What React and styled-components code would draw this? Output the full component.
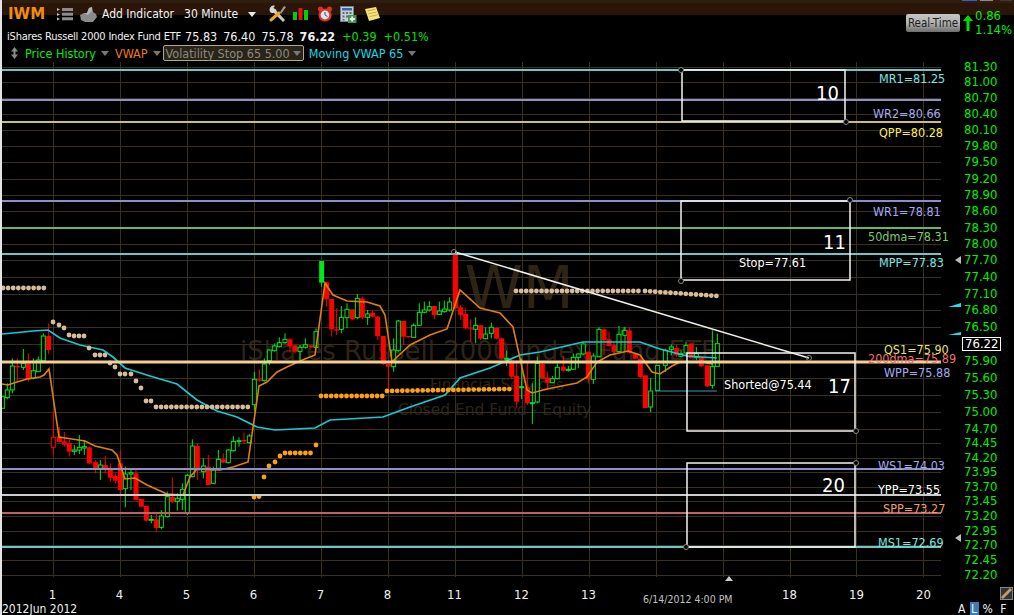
import React from 'react';
import styled, { createGlobalStyle } from 'styled-components';

const FONT = `"DejaVu Sans Condensed", "DejaVu Sans", sans-serif`;

const GlobalStyle = createGlobalStyle`
    html, body {
        margin: 0;
        padding: 0;
        background: #000;
    }
`;

const Page = styled.div`
    position: relative;
    width: 1014px;
    height: 615px;
    box-sizing: border-box;
    background: #000;
    border-left: 2px solid #e4e4e4;
    overflow: hidden;
    display: flex;
    flex-direction: column;
    font-family: ${FONT};
    font-size: 12px;
    color: #fff;
`;

const Header = styled.div`
    position: relative;
    height: 62px;
    flex: none;
    display: flex;
    background: linear-gradient(#2e1e10 0, #2e1e10 3px, #2b1509 3px, #2b1509 15px, #000 15px);
`;

const WindowTabs = styled.div`
    position: absolute;
    top: 0;
    right: 2px;
    display: flex;
    gap: 3px;
`;

const WindowTab = styled.span`
    width: ${p => p.$w}px;
    height: 1px;
    margin-right: ${p => p.$gap || 0}px;
    background: ${p => p.$color};
`;

const HeaderLeft = styled.div`
    flex: 1;
    display: flex;
    flex-direction: column;
`;

const Toolbar = styled.div`
    height: 28px;
    display: flex;
    align-items: center;
    padding-left: 6px;
`;

const Symbol = styled.span`
    width: 46px;
    font-family: "DejaVu Sans", sans-serif;
    font-weight: bold;
    font-size: 15px;
    color: #f08c12;
`;

const ToolIcon = styled.svg`
    flex: none;
    display: block;
    margin-left: ${p => p.$ml || 0}px;
`;

const ToolText = styled.span`
    margin-left: ${p => p.$ml || 0}px;
    font-size: 12px;
    white-space: nowrap;
    color: #f4f4f4;
`;

const Caret = styled.span`
    display: inline-block;
    flex: none;
    width: 0;
    height: 0;
    margin-left: ${p => p.$ml || 5}px;
    border-left: 4px solid transparent;
    border-right: 4px solid transparent;
    border-top: 5px solid ${p => p.$color || '#777'};
`;

const QuoteRow = styled.div`
    height: 16px;
    display: flex;
    align-items: center;
    padding-left: 5px;
    white-space: nowrap;
`;

const FundName = styled.span`
    width: 178px;
    font-size: 11px;
    letter-spacing: -0.2px;
    color: #f2f2f2;
`;

const Quote = styled.span`
    margin-right: ${p => p.$mr || 6}px;
    font-size: 12.5px;
    font-weight: ${p => (p.$bold ? 'bold' : 'normal')};
    color: ${p => p.$color || '#f2f2f2'};
`;

const StudyRow = styled.div`
    height: 18px;
    display: flex;
    align-items: center;
    padding-left: 9px;
    white-space: nowrap;
`;

const SortArrows = styled.svg`
    flex: none;
    margin-right: 7px;
`;

const Study = styled.span`
    display: flex;
    align-items: center;
    font-size: 12.5px;
    color: ${p => p.$color};
    margin-right: ${p => p.$mr || 0}px;
`;

const StudySelected = styled(Study)`
    height: 14px;
    padding: 0 2px;
    margin-left: 2px;
    margin-right: 5px;
    border: 1px solid #b0a890;
    border-radius: 2px;
    background: #2a2418;
`;

const RealTimeArea = styled.div`
    width: 108px;
    flex: none;
    display: flex;
    align-items: flex-start;
    padding-top: 14px;
    box-sizing: border-box;
`;

const RealTimeButton = styled.div`
    width: 54px;
    height: 18px;
    flex: none;
    box-sizing: border-box;
    border-radius: 2px;
    background: linear-gradient(#c4c4c4, #b2b2b2 50%, #6e6e6e);
    color: #1c1c1c;
    font-size: 11.5px;
    line-height: 18px;
    text-align: center;
`;

const ChangeArrow = styled.svg`
    flex: none;
    margin-left: 3px;
    margin-top: 1px;
`;

const Change = styled.div`
    margin-left: 2px;
    margin-top: -5px;
    font-size: 13px;
    line-height: 14px;
    color: #00f000;
`;

const Main = styled.div`
    height: 515px;
    flex: none;
    display: flex;
`;

const ChartSvg = styled.svg`
    flex: none;
    display: block;
    overflow: visible;
    font-family: ${FONT};
`;

const LevelLabel = styled.text`
    font-size: 12.5px;
    fill: ${p => p.$color};
`;

const Watermark = styled.text`
    font-family: "DejaVu Sans", sans-serif;
    font-size: ${p => p.$size}px;
    fill: #2e2416;
`;

const BoxNumber = styled.text`
    font-size: 20px;
    fill: #fff;
`;

const PriceAxis = styled.div`
    position: relative;
    flex: 1;
    padding-left: 23px;
`;

const Tick = styled.div`
    display: flow-root;
    height: ${p => p.$h}px;
    font-size: 13px;
    line-height: 10px;
    color: #00f000;
`;

const CurrentPrice = styled.div`
    width: fit-content;
    margin-left: -2px;
    margin-top: -2px;
    padding: 0 2px;
    height: 12px;
    line-height: 12px;
    border: 1px solid #fff;
    color: #fff;
    background: #000;
`;

const AxisMark = styled.span`
    position: absolute;
    left: ${p => p.$x}px;
    top: ${p => p.$y}px;
    width: ${p => p.$w}px;
    height: ${p => p.$h}px;
    background: ${p => p.$color};
    clip-path: ${p => p.$shape};
`;

const BottomBar = styled.div`
    position: relative;
    flex: 1;
    display: flex;
    flex-direction: column;
`;

const DayRow = styled.div`
    display: grid;
    grid-template-columns: repeat(14, 67px);
    padding-left: 17px;
    padding-top: 10px;
    height: 15px;
    line-height: 15px;
    font-size: 13px;
    text-align: center;
    color: #f0f0f0;
`;

const Footer = styled.div`
    flex: 1;
    display: flex;
    justify-content: space-between;
    align-items: flex-end;
    font-size: 12px;
    line-height: 14px;
`;

const YearLabel = styled.span`
    color: #f0f0f0;
`;

const ScaleButtons = styled.div`
    display: flex;
    gap: 4px;
    padding-right: 6px;
    color: #f4f4f4;
`;

const ScaleButton = styled.span`
    padding: 0 1.5px;
    margin-left: ${p => p.$ml || 0}px;
    background: ${p => (p.$active ? '#3c7cb4' : 'transparent')};
`;

const ReadOut = styled.span`
    position: absolute;
    left: 641px;
    top: 16px;
    font-size: 10.5px;
    color: #c0c0c0;
`;

const CursorMark = styled.span`
    position: absolute;
    left: 723px;
    top: -1px;
    width: 8px;
    height: 5px;
    background: #ccc;
    clip-path: polygon(50% 0, 100% 100%, 0 100%);
`;

const RulerButton = styled.span`
    position: absolute;
    right: 1px;
    top: 10px;
    width: 13px;
    height: 13px;
    box-sizing: border-box;
    border: 1px solid #888;
    background: #333;
`;

const RulerSvg = styled.svg`
    display: block;
`;

const TICKS = [
    ['81.30', 67], ['81.00', 82], ['80.70', 98], ['80.40', 114], ['80.10', 130], ['79.80', 146],
    ['79.50', 162], ['79.20', 179], ['78.90', 195], ['78.60', 211], ['78.30', 228], ['78.00', 244],
    ['77.70', 260], ['77.40', 277], ['77.10', 294], ['76.80', 310], ['76.50', 327], ['76.22', 344],
    ['75.90', 361], ['75.60', 378], ['75.30', 395], ['75.00', 412], ['74.70', 429], ['74.45', 443],
    ['74.20', 458], ['73.95', 472], ['73.70', 487], ['73.45', 501], ['73.20', 516], ['72.95', 531],
    ['72.70', 545], ['72.45', 560], ['72.20', 575],
];

const DAY_LINES = [53, 120, 187, 254, 321, 388, 455, 522, 589, 656, 723, 790, 856, 923];
const DAYS = ['1', '4', '5', '6', '7', '8', '11', '12', '13', '', '', '18', '19', '20'];

const LEVELS = [
    [70, '#6ec6c6', 2], [100, '#8f8fc6', 2], [122, '#c8c070', 2], [201, '#8f8fc6', 2],
    [228, '#68b468', 2], [254, '#6ec6c6', 2], [362, '#f5cf94', 3], [469, '#8f8fc6', 2],
    [495, '#cccccc', 2], [513, '#c06060', 2], [547, '#6ec6c6', 2],
];

const LABELS = [
    ['MR1=81.25', 879, 83, '#80e4e4'], ['WR2=80.66', 873, 118, '#a4a8f0'], ['QPP=80.28', 879, 137, '#ffec50'],
    ['WR1=78.81', 873, 216, '#a4a8f0'], ['50dma=78.31', 868, 241, '#7ccc70'], ['MPP=77.83', 879, 267, '#80e4e4'],
    ['QS1=75.90', 884, 354, '#e8e070'], ['200dma=75.89', 868, 363, '#f07070'], ['WPP=75.88', 884, 377, '#a4a8f0'],
    ['WS1=74.03', 878, 470, '#a4a8f0'], ['YPP=73.55', 878, 494, '#ffffff'], ['SPP=73.27', 883, 513, '#f0a060'],
    ['MS1=72.69', 878, 547, '#78e8e0'], ['Stop=77.61', 739, 267, '#ffffff'], ['Shorted@75.44', 724, 389, '#ffffff'],
];

const BOXES = [
    { x: 682, y: 70, w: 163, h: 51, n: '10', nx: 816, ny: 100, handles: [[681, 70], [846, 122]] },
    { x: 681, y: 201, w: 169, h: 79, n: '11', nx: 823, ny: 249, handles: [[850, 200], [681, 281]] },
    { x: 687, y: 353, w: 168, h: 78, n: '17', nx: 828, ny: 393, handles: [[856, 431]] },
    { x: 687, y: 463, w: 168, h: 84, n: '20', nx: 822, ny: 492, handles: [[856, 463], [686, 547]] },
];

// crop coordinates are 3x the page, so they go through fromCrop below
const fromCrop = (ox, oy, rows) => rows.map(([x, t, b, wt, wb, kind]) => ({
    x: ox + x / 3, top: oy + t / 3, bottom: oy + b / 3, wickTop: oy + wt / 3, wickBottom: oy + wb / 3, kind,
}));

const CANDLES = [
    ...fromCrop(0, 250, [
        [7, 440, 475, 440, 475, 'u'], [22, 420, 443, 400, 448, 'u'], [37, 348, 420, 325, 430, 'u'], [52, 348, 352, 325, 395, 'd'],
        [70, 340, 352, 297, 360, 'u'], [85, 340, 388, 310, 395, 'd'], [100, 362, 385, 325, 388, 'u'], [115, 330, 365, 320, 365, 'u'],
        [130, 258, 332, 250, 335, 'u'], [146, 258, 300, 220, 312, 'd'], [160, 562, 592, 487, 615, 'r'], [178, 560, 576, 530, 578, 'd'],
        [193, 574, 584, 546, 590, 'd'], [208, 580, 605, 570, 620, 'd'], [223, 600, 604, 585, 615, 'u'], [238, 592, 600, 555, 612, 'u'],
        [253, 590, 594, 570, 615, 'u'], [268, 592, 640, 590, 642, 'd'], [287, 636, 655, 630, 670, 'd'], [301, 645, 655, 630, 690, 'u'],
        [316, 645, 655, 618, 670, 'd'], [331, 655, 683, 640, 695, 'd'], [346, 678, 692, 670, 700, 'd'], [361, 640, 720, 600, 740, 'd'],
        [376, 672, 716, 650, 772, 'u'], [393, 668, 672, 655, 720, 'u'], [408, 670, 750, 660, 752, 'd'], [424, 747, 770, 747, 770, 'd'],
        [439, 768, 812, 768, 815, 'd'], [454, 808, 810, 795, 820, 'u'], [469, 808, 834, 785, 845, 'd'], [484, 798, 832, 780, 838, 'u'],
        [502, 740, 800, 725, 802, 'u'], [517, 740, 755, 682, 760, 'd'], [532, 745, 755, 730, 782, 'u'], [547, 718, 748, 700, 780, 'u'],
        [562, 676, 788, 672, 795, 'u'], [577, 588, 680, 568, 682, 'u'], [592, 588, 662, 580, 690, 'd'], [610, 648, 665, 625, 685, 'u'],
        [625, 650, 705, 615, 705, 'd'], [640, 660, 700, 650, 700, 'u'], [655, 628, 655, 600, 660, 'u'], [670, 628, 638, 610, 640, 'd'],
        [685, 600, 638, 598, 640, 'u'], [700, 574, 602, 558, 605, 'u'], [717, 572, 574, 562, 590, 'u'], [732, 570, 574, 548, 582, 'd'],
        [748, 558, 578, 552, 580, 'u'], [763, 388, 464, 365, 482, 'u'], [778, 388, 392, 358, 395, 'd'], [793, 342, 392, 325, 395, 'u'],
        [808, 300, 332, 298, 345, 'u'], [823, 288, 302, 280, 305, 'u'], [838, 278, 290, 262, 292, 'u'], [855, 268, 278, 250, 282, 'u'],
        [870, 268, 288, 265, 308, 'd'], [885, 286, 305, 285, 310, 'd'], [900, 292, 304, 285, 332, 'u'], [916, 284, 292, 265, 296, 'u'],
        [933, 286, 292, 286, 292, 'd'], [948, 245, 292, 235, 296, 'u'],
    ]),
    ...fromCrop(300, 240, [
        [65, 63, 128, 63, 140, 's'], [80, 127, 178, 127, 200, 'd'], [95, 177, 268, 177, 290, 'd'], [110, 268, 272, 205, 285, 'd'],
        [124, 232, 268, 198, 280, 'u'], [141, 208, 233, 190, 265, 'u'], [157, 208, 238, 208, 240, 'd'], [172, 175, 233, 162, 238, 'u'],
        [187, 175, 233, 170, 238, 'd'], [203, 222, 232, 210, 255, 'u'], [218, 218, 230, 212, 232, 'd'], [233, 230, 288, 228, 300, 'd'],
        [250, 288, 372, 288, 375, 'd'], [265, 372, 380, 372, 450, 'd'], [281, 330, 380, 295, 395, 'u'], [295, 243, 332, 240, 335, 'u'],
        [311, 243, 290, 243, 315, 'd'], [326, 288, 292, 288, 292, 'd'], [341, 256, 292, 250, 292, 'u'], [358, 217, 256, 190, 258, 'u'],
        [373, 210, 217, 185, 220, 'u'], [388, 200, 210, 183, 215, 'u'], [403, 198, 225, 198, 238, 'd'], [418, 213, 223, 185, 225, 'u'],
        [433, 207, 215, 182, 218, 'u'], [449, 186, 210, 172, 215, 'u'], [466, 42, 205, 42, 205, 'd'], [482, 202, 225, 195, 240, 'd'],
        [497, 222, 265, 205, 268, 'd'], [512, 265, 268, 238, 305, 'd'], [527, 256, 268, 232, 310, 'u'], [542, 256, 296, 255, 300, 'd'],
        [557, 282, 296, 262, 298, 'u'], [574, 262, 280, 248, 295, 'u'], [590, 264, 296, 262, 298, 'd'], [605, 295, 355, 293, 358, 'd'],
        [620, 355, 358, 332, 378, 'u'], [635, 362, 410, 360, 418, 'd'], [650, 408, 485, 362, 503, 'd'], [665, 440, 442, 355, 478, 'u'],
        [682, 442, 490, 368, 495, 'd'], [697, 488, 490, 430, 552, 'u'], [712, 370, 486, 350, 490, 'u'], [727, 372, 415, 368, 418, 'd'],
        [742, 412, 428, 395, 448, 'd'], [757, 416, 428, 408, 430, 'u'], [772, 382, 416, 370, 418, 'u'], [790, 380, 392, 348, 395, 'd'],
        [805, 388, 390, 378, 395, 'u'], [820, 352, 388, 340, 390, 'u'], [835, 342, 352, 340, 385, 'u'], [850, 312, 342, 308, 345, 'u'],
        [865, 335, 418, 335, 430, 'd'], [880, 348, 418, 340, 432, 'u'], [897, 268, 350, 262, 352, 'u'], [912, 268, 300, 265, 345, 'd'],
        [927, 298, 318, 275, 320, 'd'], [942, 316, 335, 308, 345, 'd'], [957, 283, 335, 258, 338, 'u'], [972, 272, 283, 262, 285, 'u'],
    ]),
    ...fromCrop(620, 322, [
        [15, 25, 40, 15, 90, 'u'], [28, 25, 92, 15, 95, 'd'], [46, 95, 110, 95, 110, 'd'], [61, 110, 165, 110, 168, 'd'],
        [76, 160, 258, 160, 258, 'd'], [92, 207, 255, 168, 270, 'u'], [113, 130, 205, 130, 205, 'u'], [136, 85, 130, 80, 150, 'u'],
        [154, 75, 82, 68, 100, 'u'], [170, 78, 100, 68, 105, 'd'], [183, 95, 103, 85, 106, 'u'], [198, 70, 93, 60, 100, 'u'],
        [213, 65, 108, 62, 110, 'd'], [229, 95, 107, 75, 115, 'u'], [244, 105, 133, 105, 135, 'd'], [262, 130, 193, 130, 195, 'd'],
        [277, 133, 190, 25, 200, 'u'], [292, 65, 133, 35, 135, 'u'],
    ]),
];

const VWAP = [
    [2, 384], [8, 385], [17, 382], [27, 379], [40, 377], [44, 375], [49, 369], [59, 437], [72, 439], [85, 441], [95, 446],
    [112, 450], [117, 455], [125, 479], [135, 478], [147, 485], [167, 494], [183, 495], [190, 477], [197, 469], [220, 470],
    [233, 467], [248, 462], [259, 386], [267, 382], [277, 372], [287, 367], [300, 361], [315, 355], [325, 283], [333, 295],
    [347, 301], [367, 302], [380, 306], [385, 315], [392, 362], [397, 357], [410, 345], [430, 335], [447, 329], [460, 290],
    [480, 308], [500, 313], [513, 327], [527, 390], [532, 393], [547, 389], [577, 383], [587, 377], [597, 362], [610, 355],
    [628, 351], [640, 355], [652, 372], [660, 374], [672, 366], [680, 362], [703, 362], [712, 364],
];

const MOVING_VWAP = [
    [2, 334], [13, 333], [33, 331], [48, 330], [60, 338], [80, 345], [103, 350], [113, 357], [125, 368], [150, 376],
    [177, 384], [197, 400], [217, 411], [237, 417], [257, 427], [275, 430], [315, 428], [330, 420], [383, 417], [410, 407],
    [445, 395], [460, 378], [490, 368], [520, 355], [540, 352], [583, 342], [640, 342], [660, 349], [687, 356], [717, 358],
];

const dotRow = (x0, x1, y0, y1, step = 5.1) => {
    const dots = [];
    for (let x = x0; x <= x1; x += step) {
        dots.push([x, y0 + ((y1 - y0) * (x - x0)) / (x1 - x0)]);
    }
    return dots;
};

const CREAM_DOTS = [
    ...dotRow(3, 48, 288, 288),
    [53, 322], [59, 325], [64, 328], [69, 335], [74, 336], [79, 336], [84, 336], [89, 348], [95, 355], [100, 355], [105, 355],
    [110, 363], [115, 367], [120, 374], [125, 374], [131, 374], [136, 381], [141, 388], [146, 401], [151, 401],
    ...dotRow(156, 249, 407, 407),
    ...dotRow(516, 640, 291, 291),
    ...dotRow(645, 718, 291, 296),
];

const ORANGE_DOTS = [
    [254, 497], [259, 496.5], [264, 477], [269, 466], [275, 462], [280, 456],
    ...dotRow(285, 311, 453, 453), [316, 445],
    ...dotRow(321, 383, 396, 396),
    ...dotRow(387, 512, 391, 389),
];

const Candle = ({ c }) => {
    const color = c.kind === 'u' || c.kind === 's' ? '#00e81a' : '#ff0000';
    const hollow = c.kind === 'u' || c.kind === 'r';
    const height = Math.max(c.bottom - c.top, 1);
    const width = hollow ? 4 : 5;
    return (
        <g>
            <line x1={c.x} x2={c.x} y1={c.wickTop} y2={c.wickBottom} stroke={color} />
            <rect
                x={c.x - width / 2}
                y={c.top}
                width={width}
                height={height}
                fill={hollow ? '#000' : color}
                stroke={hollow ? color : 'none'}
            />
        </g>
    );
};

const points = (list) => list.map(p => p.join(',')).join(' ');

const Chart = () => (
    <ChartSvg width="939" height="515" viewBox="2 62 939 515">
        <Watermark x="447" y="308" $size="59">IWM</Watermark>
        <Watermark x="240" y="360" $size="26">iShares Russell 2000 Index Fund ETF</Watermark>
        <Watermark x="430" y="390" $size="15">Financial Services</Watermark>
        <Watermark x="398" y="415" $size="15.5">Closed End Fund - Equity</Watermark>

        {TICKS.map(([label, y]) => <line key={label} x1="2" x2="941" y1={y + 0.5} y2={y + 0.5} stroke="#3a3020" />)}
        {DAY_LINES.map(x => <line key={x} x1={x + 0.5} x2={x + 0.5} y1="62" y2="577" stroke="#3a3020" />)}

        {CANDLES.map((c, i) => <Candle key={i} c={c} />)}

        <polyline points={points(MOVING_VWAP)} fill="none" stroke="#18c8d8" strokeWidth="1.7" />
        <polyline points={points(VWAP)} fill="none" stroke="#e08010" strokeWidth="1.6" />
        <line x1="655" x2="717" y1="391" y2="391" stroke="#3a9ab8" />

        {CREAM_DOTS.map(([x, y], i) => <circle key={i} cx={x} cy={y} r="2.4" fill="#d8bd98" />)}
        {ORANGE_DOTS.map(([x, y], i) => <circle key={i} cx={x} cy={y} r="2.4" fill="#ffa010" />)}

        {LEVELS.map(([y, color, w]) => <line key={y} x1="2" x2="941" y1={y} y2={y} stroke={color} strokeWidth={w} />)}

        <line x1="455" y1="252" x2="809" y2="358" stroke="#f0f0f0" strokeWidth="1.5" />
        <circle cx="454" cy="252" r="2.5" fill="none" stroke="#888" />
        <circle cx="809" cy="358" r="2.5" fill="none" stroke="#888" />

        {BOXES.map(b => (
            <g key={b.n}>
                <rect x={b.x} y={b.y} width={b.w} height={b.h} fill="none" stroke="#f4f4f4" strokeWidth="1.5" />
                {b.handles.map(([x, y]) => <circle key={x} cx={x} cy={y} r="2.5" fill="#000" stroke="#888" />)}
                <BoxNumber x={b.nx} y={b.ny}>{b.n}</BoxNumber>
            </g>
        ))}

        {LABELS.map(([text, x, y, color]) => <LevelLabel key={text} x={x} y={y} $color={color}>{text}</LevelLabel>)}
    </ChartSvg>
);

const ListIcon = () => (
    <ToolIcon $ml={3} width="16" height="14" viewBox="0 0 16 14">
        <path d="M0 1l3 1.5L0 4zM0 6l3 1.5L0 9zM0 10.5l3 1.5-3 1.5z" fill="#bbb" />
        <path d="M5 1h11v3H5zM5 5.7h11v3H5zM5 10.3h11v3H5z" fill="#8c8c8c" />
    </ToolIcon>
);

const PrinterIcon = () => (
    <ToolIcon $ml={7} width="17" height="15" viewBox="0 0 17 15">
        <path d="M9 1l3-1 1 5 3 2 1 3-4 5H5L1 13 0 8l4-2 3 0z" fill="#8a8a8a" />
        <path d="M4 6l3 0 2-5 3-1 0 4-4 4z" fill="#b4b4b4" />
    </ToolIcon>
);

const ToolsIcon = () => (
    <ToolIcon $ml={12} width="18" height="18" viewBox="0 0 18 18">
        <path d="M4 1L17 15l-2 2L2 4z" fill="#c8c8c8" />
        <path d="M12 7l4-6 2 1-5 7z" fill="#9a9a9a" />
        <path d="M11 8L3 15" stroke="#e8a820" strokeWidth="3" strokeLinecap="round" />
        <path d="M2 3c1-2 3-3 5-2L5 3l1 2 2-1c1 2-1 4-4 4C2 8 1 5 2 3z" fill="#d8d8d8" />
    </ToolIcon>
);

const BarsIcon = () => (
    <ToolIcon $ml={7} width="15" height="12" viewBox="0 0 15 12">
        <rect x="0" y="4" width="4" height="8" fill="#00d000" />
        <rect x="5.5" y="0" width="4" height="12" fill="#e81010" />
        <rect x="11" y="2" width="4" height="10" fill="#00d000" />
    </ToolIcon>
);

const ClockIcon = () => (
    <ToolIcon $ml={9} width="16" height="16" viewBox="0 0 16 16">
        <circle cx="3.5" cy="3" r="2.6" fill="#e03020" />
        <circle cx="12.5" cy="3" r="2.6" fill="#e03020" />
        <circle cx="8" cy="9" r="6.6" fill="#e03020" />
        <circle cx="8" cy="9" r="4.4" fill="#cfe8f4" />
        <path d="M8 6v3l2.5 1.5" stroke="#456" fill="none" />
    </ToolIcon>
);

const CalculatorIcon = () => (
    <ToolIcon $ml={7} width="17" height="17" viewBox="0 0 17 17">
        <rect x="0.5" y="0.5" width="13" height="15" fill="#c8ced8" stroke="#708090" />
        <rect x="2" y="2" width="10" height="2.5" fill="#3c64a8" />
        <path d="M2.5 6h2v2h-2zM6 6h2v2H6zM9.5 6h2v2h-2zM2.5 9.5h2v2h-2zM6 9.5h2v2H6zM2.5 13h2v1.5h-2z" fill="#667" />
        <rect x="8" y="9" width="8.5" height="8" fill="#3c9a48" />
        <path d="M12.2 10.5v5M9.8 13h5" stroke="#fff" strokeWidth="1.8" />
    </ToolIcon>
);

const NoteIcon = () => (
    <ToolIcon $ml={8} width="15" height="14" viewBox="0 0 15 14">
        <path d="M0 2L11 0l4 11-11 3z" fill="#f4e27a" />
        <path d="M2.5 4l8-1.8M3.5 6.8l8-1.8M4.5 9.6l8-1.8" stroke="#b8a040" strokeWidth="0.8" />
    </ToolIcon>
);

const RulerIcon = () => (
    <RulerSvg width="11" height="11" viewBox="0 0 11 11">
        <path d="M0 9L9 0l2 2-9 9z" fill="#c89a68" />
    </RulerSvg>
);

const App = () => (
    <>
        <GlobalStyle />
        <Page>
            <Header>
                <WindowTabs>
                    <WindowTab $w={15} $color="#3a5fc0" />
                    <WindowTab $w={13} $gap={4} $color="#8a8a8a" />
                    <WindowTab $w={12} $color="#3a3a3a" />
                </WindowTabs>
                <HeaderLeft>
                    <Toolbar>
                        <Symbol>IWM</Symbol>
                        <ListIcon />
                        <PrinterIcon />
                        <ToolText $ml={5}>Add Indicator</ToolText>
                        <ToolText $ml={10}>30 Minute</ToolText>
                        <Caret $ml={10} $color="#e8e8e8" />
                        <ToolsIcon />
                        <BarsIcon />
                        <ClockIcon />
                        <CalculatorIcon />
                        <NoteIcon />
                    </Toolbar>
                    <QuoteRow>
                        <FundName>iShares Russell 2000 Index Fund ETF</FundName>
                        <Quote>75.83</Quote>
                        <Quote>76.40</Quote>
                        <Quote>75.78</Quote>
                        <Quote $bold $mr={7}>76.22</Quote>
                        <Quote $color="#00e000" $mr={7}>+0.39</Quote>
                        <Quote $color="#00e000">+0.51%</Quote>
                    </QuoteRow>
                    <StudyRow>
                        <SortArrows width="7" height="12" viewBox="0 0 7 12">
                            <path d="M3.5 0L7 4.5H4.5v3H7L3.5 12 0 7.5h2.5v-3H0z" fill="#8a8a8a" />
                        </SortArrows>
                        <Study $color="#10e810" $mr={6}>Price History<Caret /></Study>
                        <Study $color="#ee7a10">VWAP<Caret /></Study>
                        <StudySelected $color="#8a8a80">Volatility Stop 65 5.00<Caret $ml={3} /></StudySelected>
                        <Study $color="#18d8e0">Moving VWAP 65<Caret /></Study>
                    </StudyRow>
                </HeaderLeft>
                <RealTimeArea>
                    <RealTimeButton>Real-Time</RealTimeButton>
                    <ChangeArrow width="10" height="16" viewBox="0 0 10 16">
                        <path d="M5 0l5 6H6.5v10h-3V6H0z" fill="#00e000" />
                    </ChangeArrow>
                    <Change>0.86<br />1.14%</Change>
                </RealTimeArea>
            </Header>
            <Main>
                <Chart />
                <PriceAxis>
                    {TICKS.map(([label, y], i) => {
                        const h = (TICKS[i + 1] ? TICKS[i + 1][1] : y + 17) - y;
                        return (
                            <Tick key={label} $h={h}>
                                {label === '76.22' ? <CurrentPrice>{label}</CurrentPrice> : label}
                            </Tick>
                        );
                    })}
                    <AxisMark $x={7} $y={270} $w={13} $h={3} $color="#18e0f0" $shape="polygon(0 100%, 100% 0, 100% 100%)" />
                    <AxisMark $x={7} $y={241} $w={13} $h={4} $color="#18e0f0" $shape="polygon(0 100%, 100% 0, 100% 100%)" />
                    <AxisMark $x={14} $y={194} $w={6} $h={8} $color="#bbb" $shape="polygon(100% 0, 100% 100%, 0 50%)" />
                    <AxisMark $x={14} $y={472} $w={6} $h={8} $color="#bbb" $shape="polygon(100% 0, 100% 100%, 0 50%)" />
                </PriceAxis>
            </Main>
            <BottomBar>
                <CursorMark />
                <DayRow>
                    {DAYS.map((d, i) => <span key={i}>{d}</span>)}
                </DayRow>
                <ReadOut>6/14/2012 4:00 PM</ReadOut>
                <RulerButton><RulerIcon /></RulerButton>
                <Footer>
                    <YearLabel>2012Jun 2012</YearLabel>
                    <ScaleButtons>
                        <span>A</span>
                        <ScaleButton $active>L</ScaleButton>
                        <span>%</span>
                        <ScaleButton $ml={2}>F</ScaleButton>
                    </ScaleButtons>
                </Footer>
            </BottomBar>
        </Page>
    </>
);

export default App;
